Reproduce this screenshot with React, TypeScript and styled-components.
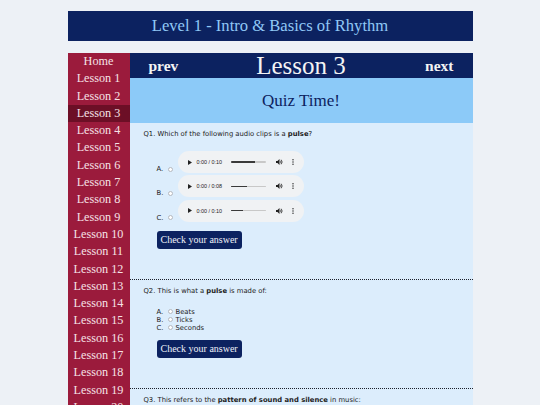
import React from 'react';
import styled, { createGlobalStyle } from 'styled-components';

const GlobalStyle = createGlobalStyle`
  html, body {
    margin: 0;
    padding: 0;
    background: #edf1f6;
  }
  * { box-sizing: border-box; }
`;

const serif = `"Liberation Serif", "Times New Roman", serif`;
const sans = `"DejaVu Sans", Verdana, sans-serif`;

const Page = styled.div`
  width: 405px;
  margin: 0 auto;
  padding-top: 11px;
  font-family: ${serif};
`;

const Banner = styled.header`
  height: 30px;
  background: #0c2260;
  color: #90c8f6;
  font-size: 16.6px;
  line-height: 30px;
  text-align: center;
  margin-bottom: 12px;
`;

const Layout = styled.div`
  display: flex;
  align-items: stretch;
`;

const Sidebar = styled.nav`
  width: 62px;
  flex: none;
  background: #9b1b3c;
  display: flex;
  flex-direction: column;
`;

const NavItem = styled.a<{ $active?: boolean }>`
  display: block;
  height: 17.3px;
  line-height: 17.3px;
  text-align: center;
  font-size: 12.2px;
  color: #f6e2e6;
  text-decoration: none;
  background: ${(p) => (p.$active ? '#6c0f26' : 'transparent')};
`;

const Main = styled.main`
  flex: 1;
  background: #dcedfc;
`;

const LessonBar = styled.div`
  height: 25px;
  background: #0c2260;
  color: #f4f4f4;
  display: flex;
  align-items: center;
  justify-content: space-between;
  padding: 0 19px;
`;

const NavLink = styled.span`
  font-size: 15.5px;
  font-weight: bold;
  width: 40px;
  &:last-child { text-align: right; }
`;

const LessonTitle = styled.h1`
  margin: 0;
  font-size: 25px;
  font-weight: normal;
  line-height: 25px;
`;

const QuizBand = styled.div`
  height: 45px;
  background: #8ccaf8;
  color: #0c2260;
  font-size: 17px;
  line-height: 46px;
  text-align: center;
`;

const Question = styled.section`
  padding: 7px 14px 30px;
  border-bottom: 1px dotted #1a1f2b;
  font-family: ${sans};
  color: #222;
`;

const Prompt = styled.p`
  margin: 0 0 12px;
  font-size: 6.8px;
  line-height: 9px;
`;

const Options = styled.div<{ $gap?: number; $after?: number }>`
  padding-left: 13px;
  display: flex;
  flex-direction: column;
  gap: ${(p) => p.$gap ?? 0}px;
  margin-bottom: ${(p) => p.$after ?? 8}px;
`;

const AudioRow = styled.div`
  display: flex;
  align-items: flex-end;
  font-size: 6.8px;
  line-height: 8px;
`;

const TextRow = styled.div`
  display: flex;
  align-items: center;
  font-size: 6.8px;
  line-height: 8px;
  height: 8px;
`;

const Letter = styled.span`
  width: 11px;
`;

const Radio = styled.span<{ $gap?: number; $lift?: number }>`
  width: 5px;
  height: 5px;
  border: 0.8px solid #b5b9bf;
  border-radius: 50%;
  background: #fff;
  margin-right: ${(p) => p.$gap ?? 3}px;
  margin-bottom: ${(p) => p.$lift ?? 0}px;
  flex: none;
`;

const Pill = styled.div`
  width: 126px;
  height: 22px;
  border-radius: 11px;
  background: #f0f2f4;
  display: flex;
  align-items: center;
  padding-left: 10px;
  font-family: "Liberation Sans", Arial, sans-serif;
  color: #222;
`;

const Time = styled.span`
  font-size: 5.4px;
  margin-left: 5px;
  width: 34px;
  white-space: nowrap;
`;

const Track = styled.div`
  width: 35px;
  height: 1.3px;
  background: #c8c8c8;
  border-radius: 1px;
  overflow: hidden;
`;

const Fill = styled.div`
  height: 100%;
  background: #3a3a3a;
`;

const CheckButton = styled.button`
  display: block;
  margin-left: 13px;
  height: 18px;
  padding: 0 4px 1px;
  border: none;
  border-radius: 3px;
  background: #0c2260;
  color: #eef1f8;
  font-family: ${serif};
  font-size: 10px;
  cursor: pointer;
`;

const Play = () => (
  <svg width="4" height="5" viewBox="0 0 4 5">
    <path d="M0 0 L4 2.5 L0 5 Z" fill="#222" />
  </svg>
);

const Volume = () => (
  <svg width="7" height="6" viewBox="0 0 14 12" style={{ marginLeft: 10 }}>
    <path d="M0 4 H3 L7 0 V12 L3 8 H0 Z" fill="#222" />
    <path d="M9 3.5 Q11 6 9 8.5" stroke="#222" strokeWidth="1.5" fill="none" />
    <path d="M10.5 1.5 Q14 6 10.5 10.5" stroke="#222" strokeWidth="1.5" fill="none" />
  </svg>
);

const Kebab = () => (
  <svg width="2" height="6" viewBox="0 0 2 6" style={{ marginLeft: 9 }}>
    <circle cx="1" cy="0.8" r="0.7" fill="#222" />
    <circle cx="1" cy="3" r="0.7" fill="#222" />
    <circle cx="1" cy="5.2" r="0.7" fill="#222" />
  </svg>
);

function AudioClip({ duration, played }: { duration: string; played: number }) {
  return (
    <Pill>
      <Play />
      <Time>0:00 / {duration}</Time>
      <Track>
        <Fill style={{ width: `${played}%` }} />
      </Track>
      <Volume />
      <Kebab />
    </Pill>
  );
}

function TextOptions({ items }: { items: string[] }) {
  return (
    <Options>
      {items.map((t, i) => (
        <TextRow key={t}>
          <Letter>{'ABC'[i]}.</Letter>
          <Radio $gap={3} />
          {t}
        </TextRow>
      ))}
    </Options>
  );
}

const lessons = ['Home', ...Array.from({ length: 24 }, (_, i) => `Lesson ${i + 1}`)];

const clips = [
  { letter: 'A.', duration: '0:10', played: 71 },
  { letter: 'B.', duration: '0:08', played: 46 },
  { letter: 'C.', duration: '0:10', played: 37 },
];

export default function App() {
  return (
    <>
      <GlobalStyle />
      <Page>
        <Banner>Level 1 - Intro &amp; Basics of Rhythm</Banner>
        <Layout>
          <Sidebar>
            {lessons.map((name) => (
              <NavItem key={name} href="#" $active={name === 'Lesson 3'}>
                {name}
              </NavItem>
            ))}
          </Sidebar>
          <Main>
            <LessonBar>
              <NavLink>prev</NavLink>
              <LessonTitle>Lesson 3</LessonTitle>
              <NavLink>next</NavLink>
            </LessonBar>
            <QuizBand>Quiz Time!</QuizBand>

            <Question>
              <Prompt>
                Q1. Which of the following audio clips is a <b>pulse</b>?
              </Prompt>
              <Options $gap={2.4} $after={9}>
                {clips.map((c) => (
                  <AudioRow key={c.letter}>
                    <Letter>{c.letter}</Letter>
                    <Radio $gap={5} $lift={1.5} />
                    <AudioClip duration={c.duration} played={c.played} />
                  </AudioRow>
                ))}
              </Options>
              <CheckButton>Check your answer</CheckButton>
            </Question>

            <Question>
              <Prompt>
                Q2. This is what a <b>pulse</b> is made of:
              </Prompt>
              <TextOptions items={['Beats', 'Ticks', 'Seconds']} />
              <CheckButton>Check your answer</CheckButton>
            </Question>

            <Question>
              <Prompt>
                Q3. This refers to the <b>pattern of sound and silence</b> in music:
              </Prompt>
              <TextOptions items={['Rhythm', 'Melody', 'Harmony']} />
              <CheckButton>Check your answer</CheckButton>
            </Question>
          </Main>
        </Layout>
      </Page>
    </>
  );
}
